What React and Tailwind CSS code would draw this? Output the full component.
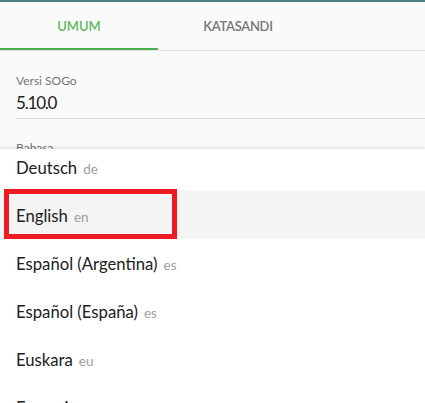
export default function App() {
  const items = [
    ["Deutsch", "de"],
    ["English", "en"],
    ["Español (Argentina)", "es"],
    ["Español (España)", "es"],
    ["Euskara", "eu"],
    ["Français", "fr"],
  ];
  return (
    <div
      className="relative w-[425px] h-[403px] overflow-hidden bg-[#fafafa]"
      style={{ fontFamily: "Lato, 'Open Sans', sans-serif" }}
    >
      <div className="h-[2px] bg-[#4a7f7f]" />
      <div className="flex h-[49px] border-b border-[#e0e0e0]">
        <div className="w-[158px] flex items-center justify-center pt-[4px] border-b-2 border-[#4caf50] text-[13px] font-semibold text-[#5cb85c]">
          UMUM
        </div>
        <div className="w-[160px] flex items-center justify-center pt-[4px] text-[13px] font-semibold tracking-[-0.3px] text-[#757575] border-b-2 border-transparent">
          KATASANDI
        </div>
      </div>
      <div className="pl-4 pt-[22px]">
        <div className="text-[12px] leading-[16px] text-[#757575]">Versi SOGo</div>
        <div className="text-[17px] leading-[24px] tracking-[-1.2px] text-[#212121] mt-[2px] pb-[3px] border-b border-[#dcdcdc]">
          5.10.0
        </div>
        <div className="text-[12px] leading-[16px] text-[#757575] mt-[21px]">Bahasa</div>
      </div>
      <div className="absolute left-0 right-0 top-[149px] bottom-0 bg-white overflow-hidden shadow-[0_-1px_4px_rgba(0,0,0,0.15)]">
        <div className="-mt-[6px]">
          {items.map(([name, code], i) => (
            <div
              key={i}
              className={`h-12 flex items-baseline pt-[15px] px-4 ${i === 1 ? "bg-[#f4f4f4]" : ""}`}
            >
              <span className="text-[16.7px] leading-[20px] text-[#212121]">{name}</span>
              <span className="ml-[6px] text-[13.5px] leading-[20px] text-[#a0a0a0]">{code}</span>
            </div>
          ))}
        </div>
      </div>
      <div className="absolute left-[4px] top-[189px] w-[173px] h-[50px] border-[5px] border-[#ed1c24]" />
    </div>
  );
}
